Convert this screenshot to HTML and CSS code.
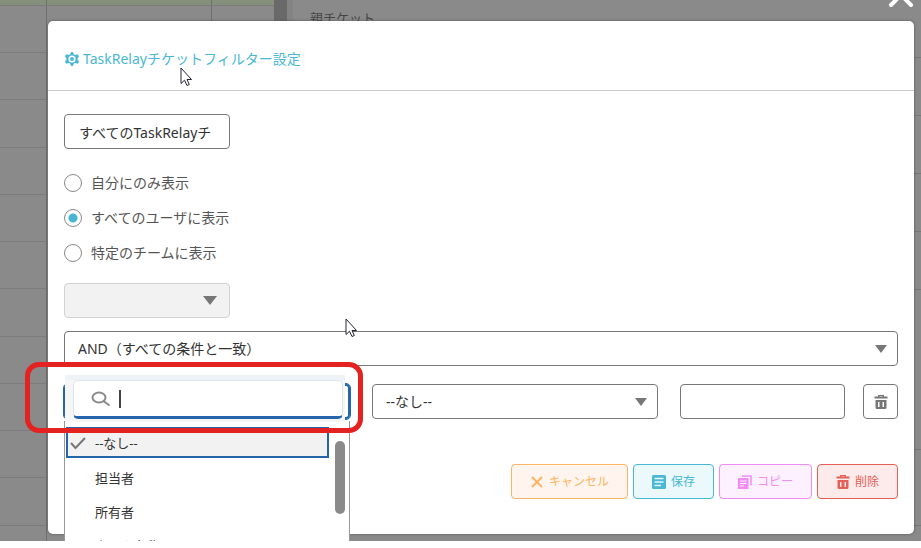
FILE: index.html
```html
<!DOCTYPE html>
<html lang="ja">
<head>
<meta charset="utf-8">
<title>TaskRelayチケットフィルター設定</title>
<link rel="stylesheet" href="styles.css">
</head>
<body>
<div class="stage">
  <div class="backdrop" aria-hidden="true">
    <div class="grid-pane">
      <div class="grid-row grid-head"><i></i><i></i><i></i></div>
      <div class="grid-row"><i></i><i></i><i></i></div>
      <div class="grid-row"><i></i><i></i><i></i></div>
      <div class="grid-row"><i></i><i></i><i></i></div>
      <div class="grid-row"><i></i><i></i><i></i></div>
      <div class="grid-row"><i></i><i></i><i></i></div>
      <div class="grid-row"><i></i><i></i><i></i></div>
      <div class="grid-row"><i></i><i></i><i></i></div>
      <div class="grid-row"><i></i><i></i><i></i></div>
      <div class="grid-row"><i></i><i></i><i></i></div>
      <div class="grid-row"><i></i><i></i><i></i></div>
      <div class="grid-row"><i></i><i></i><i></i></div>
      <div class="grid-row"><i></i><i></i><i></i></div>
    </div>
    <div class="scroll-track"></div>
    <div class="detail-pane">
      <div class="detail-row first">親チケット</div>
      <div class="detail-row"></div>
      <div class="detail-row"></div>
      <div class="detail-row"></div>
      <div class="detail-row"></div>
      <div class="detail-row tall"></div>
      <div class="detail-row mid"></div>
    </div>
  </div>

  <button class="close" type="button" aria-label="閉じる">
    <svg width="28" height="28" viewBox="0 0 28 28"><path d="M4 4l20 20M24 4L4 24" stroke="#fff" stroke-width="4" stroke-linecap="round"/></svg>
  </button>

  <form class="modal" role="dialog" aria-labelledby="title">
    <header class="modal-head">
      <svg width="14" height="14" viewBox="0 0 14 14"><path fill="currentColor" fill-rule="evenodd" d="M6 0h2l.7 2.300 1.300.7 3-.8 1 2.200L12.300 7 14 9.600l-1 2.200-3-.8-1.300.7L8 14H6l-.7-2.300L4 11l-3 .8-1-2.200L1.700 7 0 4.400l1-2.200L4 3l1.300-.7zM7 3.400A3.600 3.600 0 0 0 7 10.600 3.600 3.600 0 0 0 7 3.400z"/><circle cx="7" cy="7" r="2" fill="currentColor"/></svg>
      <h1 id="title">TaskRelayチケットフィルター設定</h1>
    </header>
    <div class="modal-body">
      <input class="box short" type="text" aria-label="フィルター名" value="すべてのTaskRelayチケット">
      <div class="radios">
        <label><input type="radio" name="scope">自分にのみ表示</label>
        <label><input type="radio" name="scope" checked>すべてのユーザに表示</label>
        <label><input type="radio" name="scope">特定のチームに表示</label>
      </div>
      <select class="box short team" aria-label="チーム" disabled><option></option></select>
      <select class="box" aria-label="一致条件"><option>AND（すべての条件と一致）</option></select>
      <div class="condition">
        <div class="field">
          <button class="box field-toggle" type="button" aria-label="項目"></button>
          <div class="search-wrap">
            <div class="search">
              <svg width="20" height="16" viewBox="0 0 20 16"><ellipse cx="8" cy="6.500" rx="6.500" ry="5" fill="none" stroke="#8a8a8a" stroke-width="2"/><path d="M13 10.500l5 3.500" stroke="#8a8a8a" stroke-width="2" stroke-linecap="round"/></svg>
              <span class="caret"></span>
              <input type="text" aria-label="項目を検索">
            </div>
          </div>
          <div class="menu">
            <ul role="listbox" aria-label="項目">
              <li class="selected" role="option" aria-selected="true"><svg width="18" height="14" viewBox="0 0 18 14"><path d="M2 7l4.500 5L16 2" fill="none" stroke="#777" stroke-width="2"/></svg>--なし--</li>
              <li role="option">担当者</li>
              <li role="option">所有者</li>
              <li role="option">タスク名称</li>
            </ul>
            <div class="menu-scroll"><span class="thumb"></span></div>
          </div>
          <div class="highlight"></div>
        </div>
        <select class="box" aria-label="演算子"><option>--なし--</option></select>
        <div class="value-group">
          <input class="box" type="text" aria-label="値">
          <button class="box trash" type="button" aria-label="条件を削除">
            <svg width="14" height="16" viewBox="0 0 14 16"><path fill="currentColor" fill-rule="evenodd" d="M4 2.500V1h6v1.500h3.500v2H.5v-2zM5.500 2v.5h3V2zM1.500 6h11v7.500q0 1.500-1.500 1.500H3q-1.500 0-1.500-1.500zM4 8v5h1.500V8zM8.500 8v5H10V8z"/></svg>
          </button>
        </div>
      </div>
      <footer class="actions">
        <button class="btn cancel" type="button"><svg width="14" height="14" viewBox="0 0 14 14"><path d="M2 2l10 10M12 2L2 12" stroke="currentColor" stroke-width="2"/></svg>キャンセル</button>
        <button class="btn save" type="button"><svg width="14" height="14" viewBox="0 0 14 14"><rect width="14" height="14" rx="1.500" fill="currentColor"/><path d="M2.500 3.500h9M2.500 7h9M2.500 10.500H9" stroke="#ebf8fc" stroke-width="1.500"/></svg>保存</button>
        <button class="btn copy" type="button"><svg width="14" height="14" viewBox="0 0 14 14"><path d="M4 1h9v9.500" fill="none" stroke="currentColor" stroke-width="1.500"/><path d="M0 3h10.500v11H0z" fill="currentColor"/><path d="M2 6h6.500M2 8.500h6.500M2 11h4" stroke="#fdf0ff"/></svg>コピー</button>
        <button class="btn delete" type="button"><svg width="14" height="16" viewBox="0 0 14 16"><path fill="currentColor" fill-rule="evenodd" d="M4 2.500V1h6v1.500h3.500v2H.5v-2zM5.500 2v.5h3V2zM1.500 6h11v7.500q0 1.500-1.500 1.500H3q-1.500 0-1.500-1.500zM4 8v5h1.500V8zM8.500 8v5H10V8z"/></svg>削除</button>
      </footer>
    </div>
  </form>

  <svg class="pointer pointer-a" width="13" height="20" viewBox="0 0 13 20"><path d="M1 1v15.500l3.500-3.300L7 18.500l2.300-1-2.300-5h4.500z" fill="#fff" stroke="#223" stroke-width="1"/></svg>
  <svg class="pointer pointer-b" width="13" height="20" viewBox="0 0 13 20"><path d="M1 1v15.500l3.500-3.300L7 18.500l2.300-1-2.300-5h4.500z" fill="#fff" stroke="#223" stroke-width="1"/></svg>
</div>
</body>
</html>
```
FILE: styles.css
```css
* { box-sizing: border-box; }

body {
  margin: 0;
  background: #fff;
  color: #333;
  font: 14px/20px "Noto Sans", "Noto Sans CJK JP", sans-serif;
}

button, input, select { font: inherit; color: inherit; margin: 0; }

.stage {
  position: relative;
  height: calc(100vh - 7px);
  overflow: hidden;
  padding: 21px 7px 7px 48px;
}

/* dimmed page behind the dialog */
.backdrop {
  position: absolute;
  inset: 0;
  display: flex;
  background: #8a8a8a;
}

.grid-pane { width: 274px; flex: none; }

.grid-row {
  display: grid;
  grid-template-columns: 47px 165px 1fr;
  height: 47px;
  border-bottom: 1px solid #7c7c7c;
}

.grid-row:nth-child(4n) { height: 48px; }
.grid-row i { border-right: 1px solid #6f6f6f; }
.grid-row i:last-child { border-right: 0; }
.grid-row.grid-head { height: 6px; background: #84907c; }

.scroll-track {
  width: 19px;
  flex: none;
  background: #838383;
  border-left: 13px solid #696969;
}

.detail-pane { flex: 1; }
.detail-row { height: 58px; border-bottom: 1px solid #777; }
.detail-row.first { padding: 8px 17px; font-size: 13px; color: #444; }
.detail-row.tall { height: 160px; }
.detail-row.mid { height: 76px; }

.close {
  position: absolute;
  top: -19px;
  right: 6px;
  height: 28px;
  padding: 0;
  border: 0;
  background: none;
}

.close svg { display: block; }

.modal {
  position: relative;
  height: 100%;
  background: #fff;
  border-radius: 5px;
  box-shadow: 0 0 3px #555;
}

.modal-head {
  display: flex;
  align-items: center;
  gap: 4px;
  height: 70px;
  padding: 6px 17px 0;
  border-bottom: 1px solid #ccc;
  color: #4ab8d3;
}

.modal-head h1 { margin: 0; font-size: 14px; font-weight: 400; }

.modal-body {
  display: flex;
  flex-direction: column;
  align-items: stretch;
  padding: 23px 16px 0;
}

.box {
  width: 100%;
  height: 35px;
  padding: 0 14px;
  border: 1px solid #777;
  border-radius: 4px;
  background-color: #fff;
  outline: 0;
}

.short { width: 166px; }
input.short { padding-right: 17px; }

select.box {
  appearance: none;
  background-image: url("data:image/svg+xml,%3Csvg xmlns='http://www.w3.org/2000/svg' width='12' height='8'%3E%3Cpath d='M0 0h12L6 8z' fill='%23777'/%3E%3C/svg%3E");
  background-repeat: no-repeat;
  background-position: right 10px center;
  padding: 0 13px;
}

select.team {
  margin-bottom: 13px;
  border-color: #d2d2d2;
  background-color: #f2f2f2;
  background-position: right 12px center;
  background-size: 14px 9px;
  opacity: 1;
}

.radios {
  display: flex;
  flex-direction: column;
  gap: 15px;
  padding: 24px 0 20px;
}

.radios label { display: flex; align-items: center; gap: 9px; color: #555; }

.radios input {
  appearance: none;
  width: 18px;
  height: 18px;
  border: 1px solid #888;
  border-radius: 50%;
}

.radios input:checked { background: radial-gradient(circle, #48b5d4 4px, #fff 5px); }

.condition {
  display: grid;
  grid-template-columns: 286fr 286fr 218fr;
  gap: 22px;
  margin-top: 18px;
}

.value-group { display: flex; gap: 18px; }

.field { position: relative; }

.field-toggle {
  display: block;
  border: 2px solid #2765ab;
  outline: 1px solid #2765ab;
}

.search-wrap {
  position: absolute;
  z-index: 2;
  top: -9px;
  left: 1px;
  right: 5px;
  height: 47px;
  padding: 5px 2px 0 8px;
  background: linear-gradient(#edf3f7 0 5px, #f6f6f6 5px);
}

.search {
  display: flex;
  align-items: center;
  height: 39px;
  padding-left: 17px;
  border: 1px solid #dfe5ec;
  border-bottom: 3px solid #2765ab;
  border-radius: 5px;
  background: #fff;
}

.caret { width: 2px; height: 18px; margin-left: 8px; background: #444; }
.search input { flex: 1; min-width: 0; border: 0; outline: 0; background: none; }

.menu {
  position: absolute;
  z-index: 1;
  top: 37px;
  left: 0;
  right: 0;
  height: 180px;
  overflow: hidden;
  display: flex;
  background: #fff;
  border: 1px solid #999;
  border-top: 0;
}

.menu ul { flex: 1; margin: 6px 0 0; padding: 0 0 0 1px; list-style: none; }

.menu li {
  display: flex;
  align-items: center;
  height: 34px;
  padding-left: 29px;
  font-size: 13px;
}

.menu li.selected {
  height: 31px;
  margin-bottom: 3px;
  padding-left: 1px;
  gap: 8px;
  background: #f2f2f2;
  border: 2px solid #2765ab;
}

.menu-scroll { width: 20px; padding: 20px 4px 0 6px; }
.thumb { display: block; height: 73px; border-radius: 5px; background: #8a8a8a; }

.highlight {
  position: absolute;
  z-index: 3;
  top: -22px;
  left: -39px;
  right: -13px;
  height: 71px;
  border: 5px solid #e32322;
  border-radius: 14px;
}

.trash {
  display: grid;
  flex: none;
  place-items: center;
  width: 35px;
  padding: 0;
  color: #777;
}

.actions {
  display: flex;
  justify-content: flex-end;
  gap: 5px;
  margin-top: 45px;
}

.btn {
  display: flex;
  align-items: center;
  justify-content: center;
  gap: 5px;
  height: 35px;
  padding: 0 18px;
  border: 1px solid;
  border-radius: 4px;
  font-size: 12px;
}

.cancel { color: #fbb465; background: #fff5ee; }
.save { color: #48b8d6; background: #ebf8fc; }
.copy { color: #f08cf2; background: #fdf0ff; }
.delete { color: #e45f56; background: #fcebea; }

.pointer { position: absolute; z-index: 4; }
.pointer-a { left: 180px; top: 67px; }
.pointer-b { left: 345px; top: 318px; }
```
